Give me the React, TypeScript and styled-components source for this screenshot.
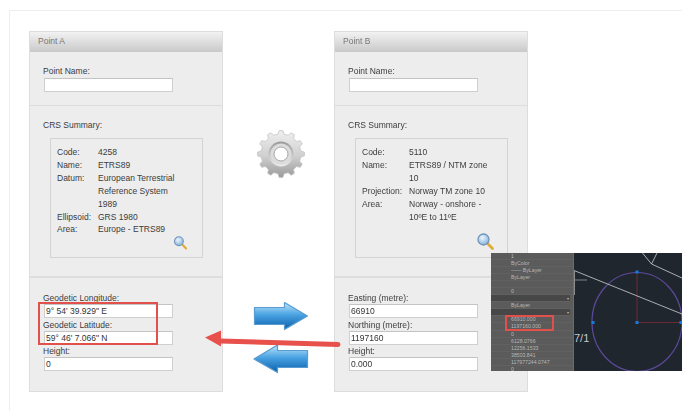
import React from 'react';
import styled, { createGlobalStyle } from 'styled-components';

const GlobalStyle = createGlobalStyle`
  html, body {
    margin: 0;
    padding: 0;
    background: #fff;
  }
  body {
    font-family: "Liberation Sans", Arial, sans-serif;
    font-size: 8.5px;
    color: #3c3c3c;
  }
`;

const Page = styled.div`
  position: relative;
  width: 682px;
  height: 411px;
  overflow: hidden;
  filter: blur(0.45px);
`;

const Frame = styled.div`
  box-sizing: border-box;
  height: 401px;
  margin: 10px 0 0 9px;
  padding: 20px 0 0 19px;
  border-top: 1px solid #eee;
  border-left: 1px solid #eee;
  display: flex;
  align-items: flex-start;
`;

const Panel = styled.section`
  box-sizing: border-box;
  width: 194px;
  height: 361px;
  background: #ededed;
  border: 1px solid #ddd;
`;

const PanelHeader = styled.header`
  box-sizing: border-box;
  height: 20px;
  padding: 3px 0 0 8px;
  line-height: 12px;
  color: #777;
  background: linear-gradient(#f2f2f2, #c9c9c9);
`;

const NameSection = styled.div`
  box-sizing: border-box;
  height: 54px;
  padding: 13px 13px 0;
  border-bottom: 1px solid #ddd;
`;

const CrsSection = styled.div`
  box-sizing: border-box;
  height: 172px;
  padding: 14px 13px 0;
  border-bottom: 2px solid #ddd;
`;

const CoordSection = styled.div`
  padding: 14px 13px 0;
`;

const Label = styled.label`
  display: block;
  height: 13px;
  line-height: 13px;
`;

const CoordLabel = styled(Label)`
  height: 12px;
`;

const TextBox = styled.input`
  display: block;
  box-sizing: border-box;
  width: 129px;
  height: 14px;
  margin: 0 0 0 1px;
  padding: 0 1px;
  font: 8.5px "Liberation Sans", Arial, sans-serif;
  color: #333;
  background: #fff;
  border: 1px solid #cfcfcf;
  border-top-color: #c4c4c4;
  border-radius: 0;
  outline: none;
`;

const Field = styled.div`
  height: 26.5px;
`;

const SummaryBox = styled.div`
  box-sizing: border-box;
  display: flex;
  flex-direction: column;
  width: 153px;
  height: 120px;
  margin: 8px 0 0 7px;
  padding: 7px 13px 7px 6px;
  border: 1px solid #d4d4d4;
`;

const SummaryGrid = styled.dl<{ $labelWidth: number }>`
  display: grid;
  grid-template-columns: ${(p) => p.$labelWidth}px 86px;
  margin: 0;
  line-height: 12.9px;
`;

const Term = styled.dt`
  margin: 0;
`;

const Detail = styled.dd`
  margin: 0;
`;

const ZoomIcon = styled.svg`
  display: block;
  margin-top: auto;
  align-self: flex-end;
`;

const Center = styled.div`
  box-sizing: border-box;
  width: 111px;
  height: 361px;
  padding: 99px 0 0 5px;
  display: flex;
  flex-direction: column;
  align-items: center;
`;

const GearIcon = styled.svg`
  display: block;
`;

const ArrowIcon = styled.svg`
  display: block;
`;

const RightArrowIcon = styled(ArrowIcon)`
  margin-top: 123px;
`;

const LeftArrowIcon = styled(ArrowIcon)`
  margin-top: 13px;
`;

const Callout = styled.div<{ $l: number; $t: number; $w: number; $h: number }>`
  position: absolute;
  left: ${(p) => p.$l}px;
  top: ${(p) => p.$t}px;
  width: ${(p) => p.$w}px;
  height: ${(p) => p.$h}px;
  box-sizing: border-box;
  border: 2px solid #e2504b;
`;

const RedArrow = styled.svg`
  position: absolute;
  left: 200px;
  top: 325px;
`;

const CadShot = styled.div`
  position: absolute;
  left: 491px;
  top: 253px;
  width: 191px;
  height: 118px;
  display: flex;
  overflow: hidden;
  background: #20262e;
`;

const CadProps = styled.div`
  box-sizing: border-box;
  flex: none;
  width: 83px;
  height: 118px;
  background: #5b5b5b;
  border-right: 1px solid #6b6b6b;
  font-size: 5.2px;
  color: #b8b8b8;
`;

const CadRow = styled.div<{ $dark?: boolean }>`
  position: relative;
  box-sizing: border-box;
  height: 7.05px;
  line-height: 7px;
  padding-left: 20px;
  white-space: nowrap;
  border-bottom: 1px solid #616161;
  background: ${(p) => (p.$dark ? '#474747' : 'transparent')};
  margin-right: ${(p) => (p.$dark ? '3px' : '0')};
  &::after {
    content: '${(p) => (p.$dark ? '▾' : '')}';
    position: absolute;
    right: 1px;
    top: 0;
    font-size: 4px;
  }
`;

const CadCanvas = styled.svg`
  display: block;
  flex: none;
`;

const CadScale = styled.span`
  position: absolute;
  left: 83px;
  top: 79px;
  font-size: 11px;
  line-height: 12px;
  color: #c8c8c8;
`;

// 12 toothed gear outline, worked out once from the tooth angles
const gearPath = (() => {
  const cx = 24;
  const cy = 24;
  const teeth = 12;
  const pts: string[] = [];
  for (let i = 0; i < teeth; i++) {
    const a = (i / teeth) * Math.PI * 2;
    const step = (Math.PI * 2) / teeth;
    const list: [number, number][] = [
      [20, a - step * 0.3],
      [23.5, a - step * 0.15],
      [23.5, a + step * 0.15],
      [20, a + step * 0.3],
    ];
    list.forEach(([r, ang]) => {
      pts.push(`${(cx + r * Math.sin(ang)).toFixed(2)} ${(cy - r * Math.cos(ang)).toFixed(2)}`);
    });
  }
  return 'M' + pts.join('L') + 'Z';
})();

const Gear = () => (
  <GearIcon width={48} height={48} viewBox="0 0 48 48">
    <defs>
      <linearGradient id="gearBody" x1="0" y1="0" x2="0" y2="1">
        <stop offset="0" stopColor="#efefef" />
        <stop offset="0.55" stopColor="#cfcfcf" />
        <stop offset="1" stopColor="#9a9a9a" />
      </linearGradient>
      <linearGradient id="gearRing" x1="0" y1="0" x2="0" y2="1">
        <stop offset="0" stopColor="#9a9a9a" />
        <stop offset="1" stopColor="#ececec" />
      </linearGradient>
    </defs>
    <path d={gearPath} fill="url(#gearBody)" stroke="#c4c4c4" strokeWidth="0.8" strokeLinejoin="round" />
    <circle cx="24" cy="24" r="12.5" fill="url(#gearRing)" />
    <circle cx="24" cy="24" r="10.5" fill="#dcdcdc" />
    <circle cx="24" cy="24" r="7" fill="#fff" stroke="#a8a8a8" strokeWidth="1" />
  </GearIcon>
);

const Magnifier = () => (
  <ZoomIcon width={17} height={17} viewBox="0 0 17 17">
    <defs>
      <radialGradient id="lens" cx="0.4" cy="0.35" r="0.7">
        <stop offset="0" stopColor="#eef6fd" />
        <stop offset="1" stopColor="#7fb0dc" />
      </radialGradient>
    </defs>
    <line x1="10" y1="10" x2="15.5" y2="15.5" stroke="#e0a93a" strokeWidth="2.6" strokeLinecap="round" />
    <circle cx="6.5" cy="6.5" r="5.5" fill="url(#lens)" stroke="#6f94b8" strokeWidth="1.3" />
  </ZoomIcon>
);

const BlueGradient = ({ id }: { id: string }) => (
  <linearGradient id={id} x1="0" y1="0" x2="0" y2="1">
    <stop offset="0" stopColor="#bfe6fc" />
    <stop offset="0.45" stopColor="#4aa3e2" />
    <stop offset="1" stopColor="#0a5fae" />
  </linearGradient>
);

const ForwardArrow = () => (
  <RightArrowIcon width={56} height={30} viewBox="0 0 56 30">
    <defs>
      <BlueGradient id="arrowRight" />
    </defs>
    <path
      d="M1.5 6.5H31.5V1.5L54.5 15L31.5 28.5V23.5H1.5Z"
      fill="url(#arrowRight)"
      stroke="#5a9ccf"
      strokeWidth="1.2"
      strokeLinejoin="round"
    />
  </RightArrowIcon>
);

const BackArrow = () => (
  <LeftArrowIcon width={56} height={30} viewBox="0 0 56 30">
    <defs>
      <BlueGradient id="arrowLeft" />
    </defs>
    <path
      d="M54.5 6.5H24.5V1L1 15L24.5 28.5V23.5H54.5Z"
      fill="url(#arrowLeft)"
      stroke="#5a9ccf"
      strokeWidth="1.2"
      strokeLinejoin="round"
    />
  </LeftArrowIcon>
);

const cadRows: { text?: string; dark?: boolean }[] = [
  { text: '1' },
  { text: 'ByColor' },
  { text: '—— ByLayer' },
  { text: 'ByLayer' },
  {},
  { text: '0' },
  { dark: true },
  { text: 'ByLayer' },
  { dark: true },
  { text: '66910.000' },
  { text: '1197160.000' },
  { text: '0' },
  { text: '6128.0766' },
  { text: '12256.1533' },
  { text: '38503.841' },
  { text: '117977244.0747' },
  { text: '0' },
];

const CadScreenshot = () => (
  <CadShot>
    <CadProps>
      {cadRows.map((row, i) => (
        <CadRow key={i} $dark={row.dark}>
          {row.text}
        </CadRow>
      ))}
    </CadProps>
    <CadCanvas width={108} height={118} viewBox="574 253 108 118">
      <line x1="637" y1="272" x2="637" y2="322.5" stroke="#6b2a33" strokeWidth="1" />
      <line x1="637" y1="322.5" x2="682" y2="322.5" stroke="#6b2a33" strokeWidth="1" />
      <ellipse cx="637" cy="322" rx="45" ry="49.5" fill="none" stroke="#5d4a9c" strokeWidth="1.2" />
      <path d="M574 270.5L682 314" stroke="#cfd2d4" strokeWidth="0.8" fill="none" />
      <path d="M642.5 253L651.5 264L682 278M657 253L651.5 264" stroke="#cfd2d4" strokeWidth="0.8" fill="none" />
      <path d="M574 280H587" stroke="#9a9da0" strokeWidth="0.8" />
      <path d="M574.5 270V295" stroke="#8b8e91" strokeWidth="1" />
      <g fill="#1679e0">
        <rect x="635.5" y="270.5" width="3" height="3" />
        <rect x="591.5" y="321" width="3" height="3" />
        <rect x="635.5" y="321" width="3" height="3" />
        <rect x="679.5" y="321" width="3" height="3" />
      </g>
    </CadCanvas>
    <CadScale>7/1</CadScale>
    <Callout $l={14} $t={62} $w={49} $h={15.5} />
  </CadShot>
);

type Row = { term: string; lines: React.ReactNode };

const pointARows: Row[] = [
  { term: 'Code:', lines: '4258' },
  { term: 'Name:', lines: 'ETRS89' },
  { term: 'Datum:', lines: 'European Terrestrial Reference System 1989' },
  { term: 'Ellipsoid:', lines: 'GRS 1980' },
  { term: 'Area:', lines: 'Europe - ETRS89' },
];

const pointBRows: Row[] = [
  { term: 'Code:', lines: '5110' },
  { term: 'Name:', lines: 'ETRS89 / NTM zone 10' },
  { term: 'Projection:', lines: 'Norway TM zone 10' },
  { term: 'Area:', lines: 'Norway - onshore - 10ºE to 11ºE' },
];

type PointProps = {
  title: string;
  rows: Row[];
  labelWidth: number;
  fields: { label: string; value: string }[];
};

const PointPanel = ({ title, rows, labelWidth, fields }: PointProps) => (
  <Panel>
    <PanelHeader>{title}</PanelHeader>
    <NameSection>
      <Label>Point Name:</Label>
      <TextBox readOnly defaultValue="" />
    </NameSection>
    <CrsSection>
      <div>CRS Summary:</div>
      <SummaryBox>
        <SummaryGrid $labelWidth={labelWidth}>
          {rows.map((r) => (
            <React.Fragment key={r.term}>
              <Term>{r.term}</Term>
              <Detail>{r.lines}</Detail>
            </React.Fragment>
          ))}
        </SummaryGrid>
        <Magnifier />
      </SummaryBox>
    </CrsSection>
    <CoordSection>
      {fields.map((f) => (
        <Field key={f.label}>
          <CoordLabel>{f.label}</CoordLabel>
          <TextBox readOnly defaultValue={f.value} />
        </Field>
      ))}
    </CoordSection>
  </Panel>
);

const App = () => (
  <Page>
    <GlobalStyle />
    <Frame>
      <PointPanel
        title="Point A"
        rows={pointARows}
        labelWidth={41}
        fields={[
          { label: 'Geodetic Longitude:', value: '9° 54\' 39.929" E' },
          { label: 'Geodetic Latitude:', value: '59° 46\' 7.066" N' },
          { label: 'Height:', value: '0' },
        ]}
      />
      <Center>
        <Gear />
        <ForwardArrow />
        <BackArrow />
      </Center>
      <PointPanel
        title="Point B"
        rows={pointBRows}
        labelWidth={47}
        fields={[
          { label: 'Easting (metre):', value: '66910' },
          { label: 'Northing (metre):', value: '1197160' },
          { label: 'Height:', value: '0.000' },
        ]}
      />
    </Frame>
    <Callout $l={38} $t={302} $w={120} $h={43} />
    <RedArrow width={142} height={30} viewBox="200 325 142 30">
      <path d="M220 341L338 344.5" stroke="#e8504c" strokeWidth="5" strokeLinecap="round" fill="none" />
      <path d="M205 337.5L221 330.5L221 346.5Z" fill="#e8504c" />
    </RedArrow>
    <CadScreenshot />
  </Page>
);

export default App;
